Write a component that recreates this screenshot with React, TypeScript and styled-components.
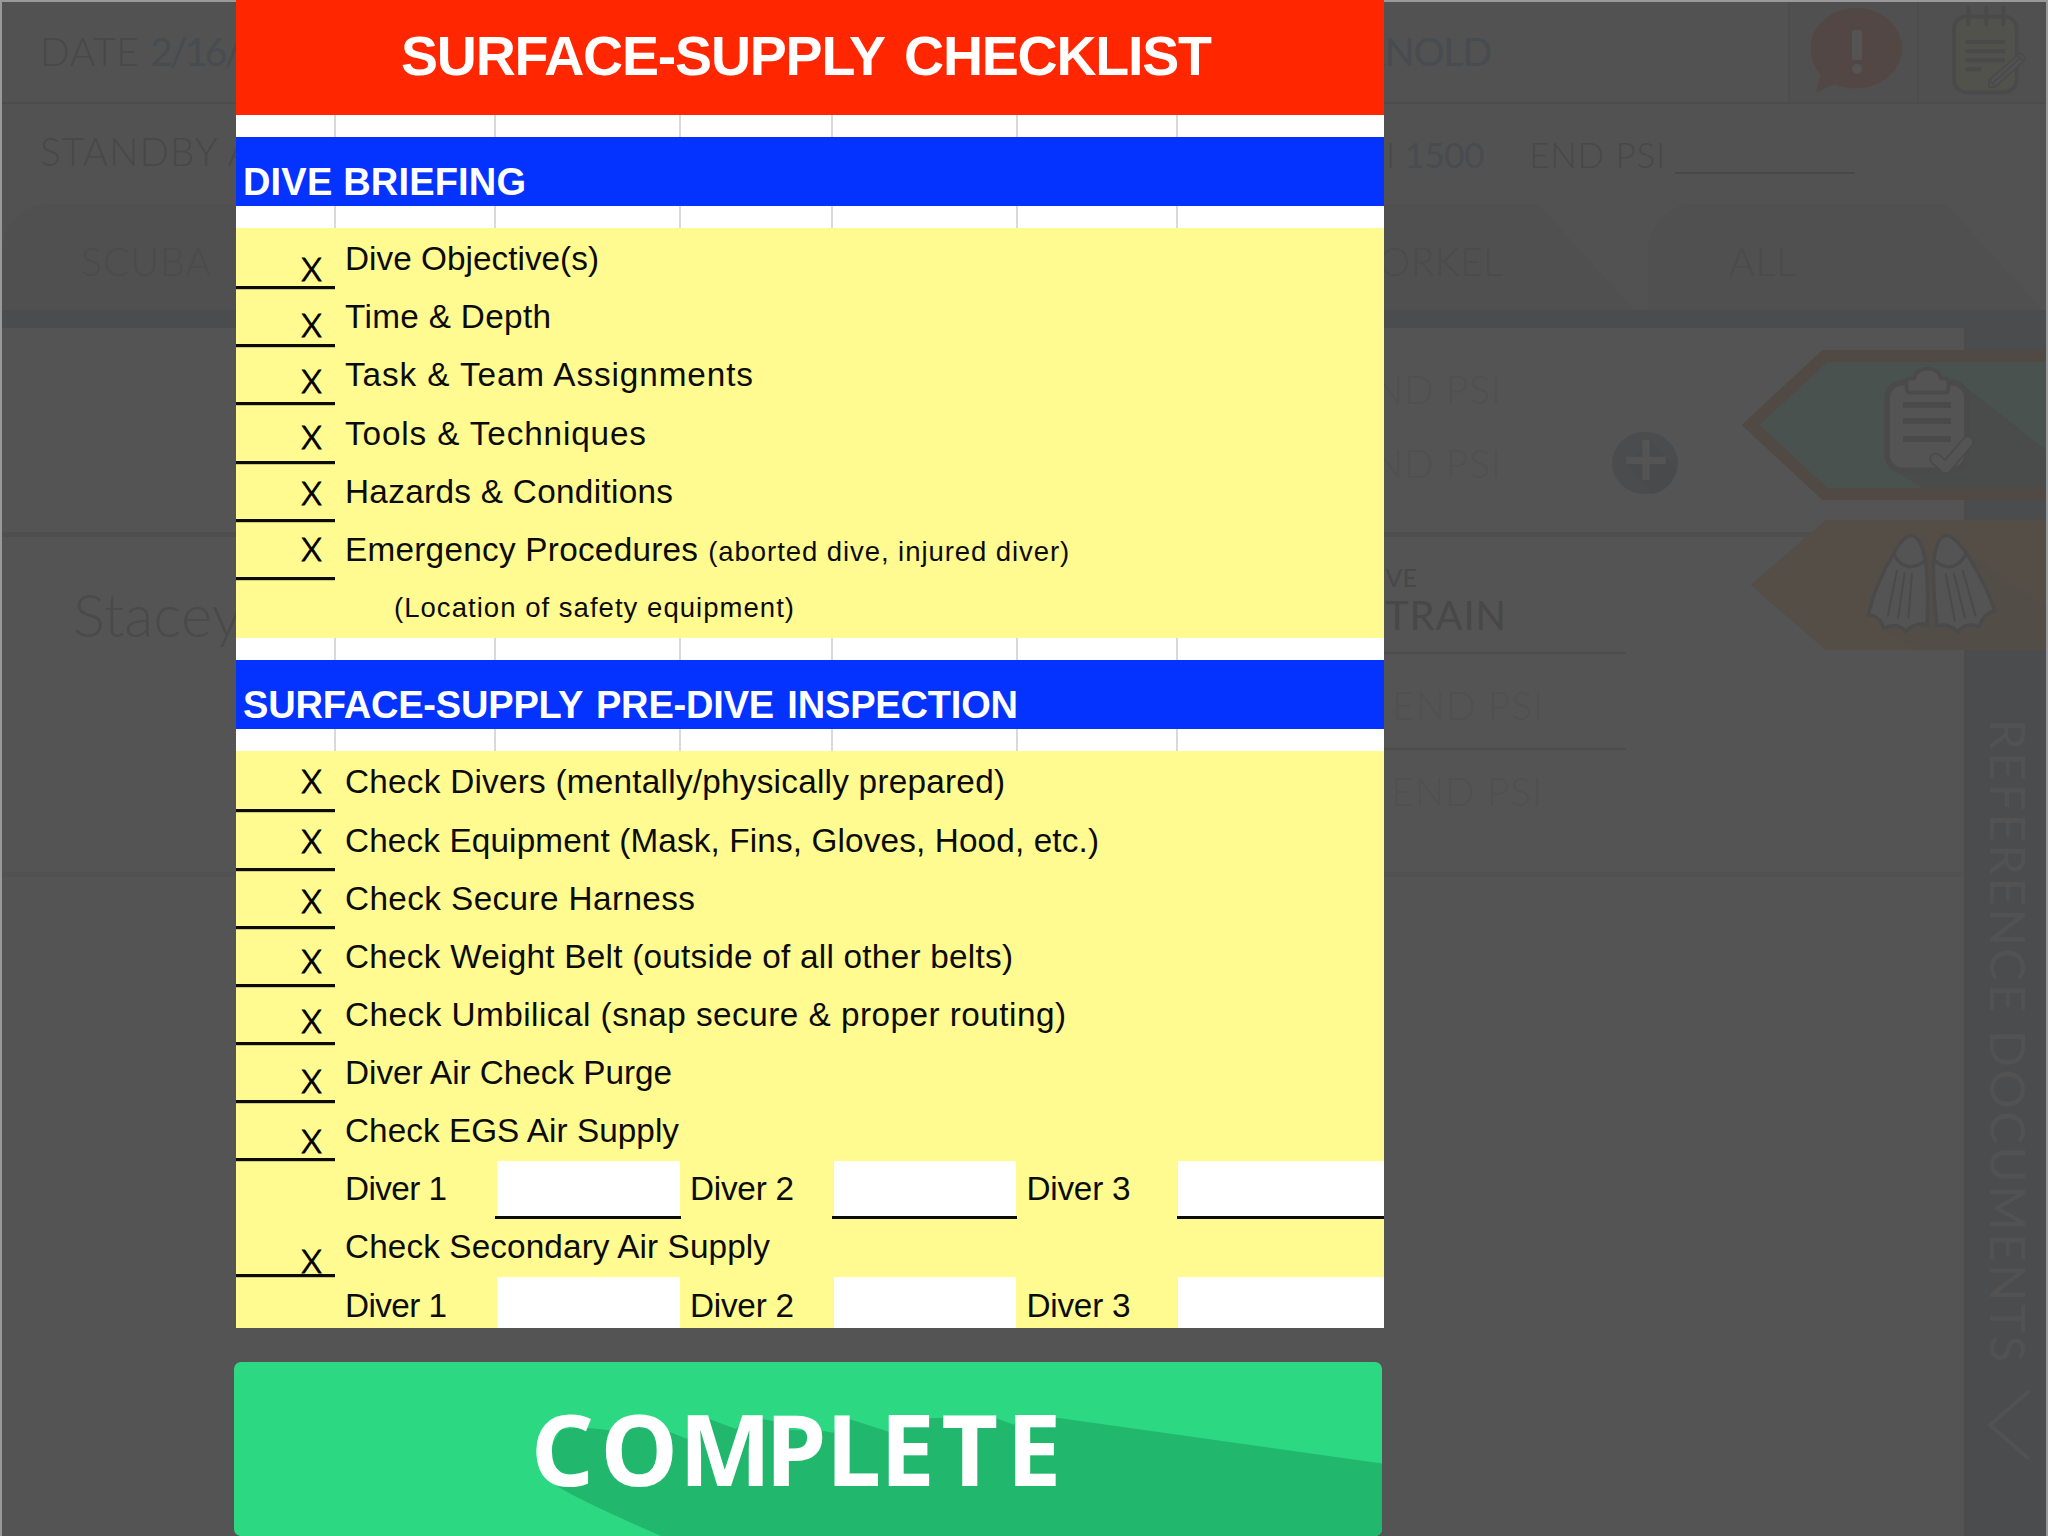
import React, { useLayoutEffect, useRef, useState } from 'react';
import styled, { createGlobalStyle, css } from 'styled-components';

const GlobalStyle = createGlobalStyle`
  * { box-sizing: border-box; }
  body { margin: 0; background: #545454; }
`;

const ui = `Lato, 'Open Sans', sans-serif`;
const sheetFont = `'Liberation Sans', Arial, sans-serif`;

/* ---------- Text tracked to fill a given measure ---------- */

const Tracked = styled.span<{ $vertical?: boolean }>`
  display: inline-block;
  white-space: pre;
  ${(p) => p.$vertical && css`writing-mode: vertical-rl;`}
`;

function Fit({ width, vertical, children }: { width: number; vertical?: boolean; children: string }) {
  const ref = useRef<HTMLSpanElement>(null);
  const [spacing, setSpacing] = useState(0);
  useLayoutEffect(() => {
    const el = ref.current;
    if (!el) return;
    el.style.letterSpacing = '0px';
    const box = el.getBoundingClientRect();
    const natural = vertical ? box.height : box.width;
    const next = (width - natural) / (children.length - 1);
    el.style.letterSpacing = `${next}px`;
    setSpacing(next);
  }, [width, vertical, children]);
  return (
    <Tracked ref={ref} $vertical={vertical} style={{ letterSpacing: `${spacing}px` }}>
      {children}
    </Tracked>
  );
}

/* ---------- Dimmed dive log behind the sheet ---------- */

const Root = styled.div`
  position: relative;
  width: 2048px;
  height: 1536px;
  overflow: hidden;
`;

const Screen = styled.div`
  position: relative;
  width: 2048px;
  height: 1536px;
  overflow: hidden;
  display: flex;
  flex-direction: column;
  background: #525252;
  border: 2px solid #999;
  border-bottom: 0;
  font-family: ${ui};
  color: #484848;
`;

const Header = styled.header`
  flex: none;
  display: flex;
  height: 102px;
  border-bottom: 2px solid #4c4c4c;
`;

const HeaderTitle = styled.div`
  flex: 1;
  display: flex;
  justify-content: space-between;
  align-items: center;
  padding: 0 297px 2px 38px;
  font-size: 39px;
  font-weight: 300;
  line-height: 60px;
  white-space: pre;
`;

const Value = styled.span`
  color: #484b4f;
  font-weight: 400;
`;

const HeaderCell = styled.div`
  width: 129px;
  border-left: 2px solid #4d4d4d;
  background: #505050;
  svg { display: block; }
`;

const GaugeBar = styled.div`
  flex: none;
  display: flex;
  justify-content: space-between;
  height: 100px;
  padding: 0 191px 0 38px;
  font-size: 38.5px;
  font-weight: 300;
  line-height: 94px;
  white-space: pre;
`;

const Gauges = styled.div`
  display: flex;
  font-size: 35px;
  line-height: 101px;
`;

const Blank = styled.span`
  width: 180px;
  height: 70px;
  margin-left: 9px;
  border-bottom: 2px solid #484848;
`;

const EndPsi = styled.span`
  margin-left: 45px;
`;

const Tabs = styled.nav`
  flex: none;
  display: flex;
  height: 106px;
`;

const Tab = styled.div<{ $inset: number; $push?: boolean }>`
  flex: none;
  width: 394px;
  padding: 8px 0 0 ${(p) => p.$inset}px;
  margin-left: ${(p) => (p.$push ? 'auto' : '0')};
  margin-right: 14px;
  border-top-left-radius: 46px 48px;
  background: #505050;
  clip-path: polygon(0 0, 298px 0, 100% 100%, 0 100%);
  font-size: 39px;
  font-weight: 300;
  line-height: 98px;
  color: #4b4b4b;
  &:last-child { margin-right: 4px; }
`;

const Band = styled.div`
  flex: none;
  height: 18px;
  background: #4b4c4e;
`;

const Body = styled.div`
  flex: 1;
  display: flex;
  min-height: 0;
`;

const Log = styled.main`
  flex: 1;
  background: #545454;
`;

const TeamRow = styled.section`
  display: flex;
  height: 209px;
  padding-top: 24px;
  border-bottom: 5px solid #4e4e4e;
`;

const FaintColumn = styled.div<{ $right: number }>`
  width: ${(p) => p.$right}px;
  display: flex;
  flex-direction: column;
  align-items: flex-end;
  font-size: 39px;
  font-weight: 300;
  line-height: 74px;
  color: #505050;
`;

const AddButton = styled.div`
  margin: 79px 0 0 109px;
  svg { display: block; }
`;

const DiverRow = styled.section`
  display: flex;
  height: 340px;
  border-bottom: 5px solid #515151;
`;

const DiverName = styled.div`
  width: 1000px;
  padding: 37px 0 0 71px;
  font-size: 60px;
  font-weight: 300;
  line-height: 80px;
  color: #4a4a4a;
`;

const DiverDetail = styled.div`
  width: 624px;
  display: flex;
  flex-direction: column;
`;

const Purpose = styled.div`
  height: 117px;
  padding: 21px 119px 0 0;
  border-bottom: 2px solid #4c4c4c;
  display: flex;
  flex-direction: column;
  align-items: flex-end;
  font-size: 40px;
  line-height: 38px;
  color: #484848;
`;

const PurposeCaption = styled.small`
  margin-right: 90px;
  font-size: 25px;
`;

const PsiLine = styled.div<{ $line?: boolean }>`
  height: ${(p) => (p.$line ? 96 : 90)}px;
  padding-right: ${(p) => (p.$line ? 82 : 83)}px;
  border-bottom: ${(p) => (p.$line ? '2px solid #4c4c4c' : '0')};
  text-align: right;
  font-size: 39px;
  font-weight: 300;
  line-height: ${(p) => (p.$line ? 102 : 82)}px;
  color: #505050;
`;

const Sidebar = styled.aside`
  width: 82px;
  background: #4b4c4e;
  display: flex;
  flex-direction: column;
  align-items: center;
  padding: 391px 0 0 8px;
  font-size: 49px;
  line-height: 60px;
  color: #525252;
  svg { display: block; margin: 24px 0 0 -1px; }
`;

const Flags = styled.div`
  position: absolute;
  top: 338px;
  right: 0;
  svg { display: block; }
`;

/* ---------- Checklist sheet ---------- */

const Modal = styled.div`
  position: absolute;
  top: 0;
  left: 236px;
  width: 1148px;
  display: flex;
  flex-direction: column;
`;

const Sheet = styled.article`
  position: relative;
  height: 1328px;
  overflow: hidden;
  background: #fffb91;
  font-family: ${sheetFont};
  color: #0c0c06;
`;

const Title = styled.h1`
  margin: 0;
  height: 115px;
  background: #ff2600;
  color: #fff;
  padding-left: 165px;
  font-size: 55.5px;
  line-height: 112px;
  word-spacing: 6px;
`;

const columns = '99px 160px 185px 152px 184.5px 160px 1fr';

const Gridlines = styled.div<{ $h: number }>`
  display: grid;
  grid-template-columns: ${columns};
  height: ${(p) => p.$h}px;
  background: #fff;
  span + span {
    margin-left: -1px;
    border-left: 2px solid #d9d9d9;
  }
`;

const SectionHead = styled.h2<{ $wordGap: number }>`
  margin: 0;
  height: 69px;
  padding: 26px 0 0 7px;
  background: #0433ff;
  color: #fff;
  font-size: 38px;
  line-height: 38px;
  word-spacing: ${(p) => p.$wordGap}px;
`;

const Rows = styled.div<{ $pitch: number }>`
  display: grid;
  grid-template-rows: 61.2px;
  grid-auto-rows: ${(p) => p.$pitch}px;
`;

const Row = styled.div`
  display: grid;
  grid-template-columns: ${columns};
  font-size: 33.3px;
  line-height: 38px;
`;

const Rule = styled.div`
  border-bottom: 3px solid #0c0c06;
  box-shadow: 0 1px 0 rgba(12, 12, 6, 0.2);
`;

const Label = styled.div<{ $wide?: boolean; $indent?: number }>`
  grid-column: ${(p) => (p.$wide ? '2 / -1' : 'auto')};
  align-self: end;
  padding: 0 0 ${(p) => (p.$indent ? 13 : 11)}px ${(p) => p.$indent ?? 10}px;
  white-space: nowrap;
`;

const Note = styled.small<{ $gap?: number }>`
  margin-left: ${(p) => p.$gap ?? 0}px;
  font-size: 27.5px;
  line-height: 30px;
`;

const Field = styled.div`
  margin-right: -0.5px;
  border-bottom: 3px solid #0c0c06;
  background: linear-gradient(#fff, #fff) 1.5px 0 / calc(100% - 3px) 100% no-repeat;
  &:last-child {
    background-size: 100% 100%;
  }
`;

const Marks = styled.div<{ $top: number; $pitch: number }>`
  position: absolute;
  top: ${(p) => p.$top}px;
  left: 0;
  width: 151px;
  text-align: center;
  font-family: ${ui};
  font-weight: 300;
  font-size: 45px;
  line-height: ${(p) => p.$pitch}px;
  color: #000;
  -webkit-text-stroke: 0.9px #000;
  div { height: ${(p) => p.$pitch}px; }
`;

const CompleteButton = styled.button`
  position: relative;
  display: flex;
  margin: 34px 0 0 -2px;
  padding: 0 0 0 297px;
  width: 1148px;
  height: 174px;
  overflow: hidden;
  border: 0;
  border-radius: 7px;
  background: #2cd982;
  color: #fff;
  text-align: left;
  font-family: 'Noto Sans', 'Open Sans', sans-serif;
  font-weight: 700;
  font-size: 98px;
  line-height: 173px;
`;

const Caption = styled.span`
  position: relative;
  white-space: nowrap;
`;

const Kern = styled.span<{ $by: number }>`
  letter-spacing: ${(p) => p.$by}px;
`;

const LongShadow = styled.svg`
  position: absolute;
  inset: 0;
`;

/* ---------- Icons ---------- */

const AlertIcon = () => (
  <svg width="124" height="98" viewBox="0 6 372 294">
    <path fill="#524744" d="M199 24C275 24 336 78 336 144S275 265 199 265C174 265 153 260 134 254C122 256 96 270 79 276C80 262 91 234 92 222C73 203 62 174 62 144C62 78 123 24 199 24Z" />
    <rect x="186" y="90" width="30" height="90" rx="5" fill="#545454" />
    <circle cx="201" cy="207" r="15" fill="#545454" />
  </svg>
);

const NotesIcon = () => (
  <svg width="127" height="98" viewBox="386 6 381 294">
    <rect x="491" y="49" width="188" height="228" rx="38" fill="#51524b" stroke="#4a4a4a" strokeWidth="11" />
    <path fill="none" stroke="#4a4a4a" strokeWidth="12" strokeLinecap="round" d="M534 23V73M588 23V73M639 23V73" />
    <path fill="none" stroke="#4a4a4a" strokeWidth="12" d="M525 126H644M525 153H644M525 181H644M525 208H573" />
    <path fill="#525252" stroke="#4a4a4a" strokeWidth="5" strokeLinejoin="round" d="M596 240L681 166L691 160L706 174L700 183L616 260L596 262ZM596 240L616 260M681 166L700 183M606 250L690 174" />
  </svg>
);

const PlusIcon = () => (
  <svg width="68" height="64" viewBox="0 0 204 192">
    <ellipse cx="102" cy="96" rx="99" ry="93" fill="#4b4c4e" />
    <path fill="#494a4c" d="M116 28L196 112C194 150 160 184 124 188L46 98Z" />
    <path fill="#545454" d="M94 27h22v50h48v22h-48v48h-22v-48h-48v-22h48z" />
  </svg>
);

const ChevronIcon = () => (
  <svg width="44" height="72" viewBox="0 0 44 72">
    <path fill="none" stroke="#525252" strokeWidth="4" d="M42 2L3 36L42 70" />
  </svg>
);

const FlagIcons = () => (
  <svg width="306" height="320" viewBox="0 0 918 960">
    <path fill="#514a44" d="M5 255L247 30H918V480H247Z" />
    <path fill="#49524e" d="M58 255L262 66H918V444H262Z" />
    <path fill="#494c4a" d="M670 136L918 330V444H548L455 385Z" />
    <rect x="441" y="128" width="240" height="263" rx="48" fill="#545454" stroke="#4a4a4a" strokeWidth="17" />
    <path fill="#545454" stroke="#4a4a4a" strokeWidth="11" strokeLinejoin="round" d="M524 115C526 76 600 76 602 115H614Q625 115 625 127V146Q625 158 614 158H511Q500 158 500 146V127Q500 115 511 115Z" />
    <path stroke="#4a4a4a" strokeWidth="18" d="M489 195H633M489 243H633M489 297H633" />
    <path fill="none" stroke="#4a4a4a" strokeWidth="38" strokeLinecap="round" strokeLinejoin="round" d="M587 357L617 383L683 306" />
    <path fill="none" stroke="#545454" strokeWidth="28" strokeLinecap="round" strokeLinejoin="round" d="M587 357L617 383L683 306" />

    <path fill="#544e47" d="M32 735L257 540H918V930H257Z" />
    <path fill="#524d47" d="M680 634L918 805V930H530L430 866L545 590L580 628Z" />
    <g fill="#545454" stroke="#4a4a4a" strokeWidth="10" strokeLinejoin="miter">
      <path d="M461 640C480 606 500 586 516 586C534 588 549 622 556 662C566 720 561 790 562 855C542 848 514 854 497 874C484 856 455 850 431 866C428 846 410 826 385 824C400 760 425 700 461 640Z" />
      <path d="M680 640C655 606 634 586 618 586C598 590 586 622 582 662C576 720 584 790 591 857C612 850 638 858 653 876C666 858 690 848 717 860C722 840 742 816 764 812C745 750 710 690 680 640Z" />
      <path fill="none" d="M461 640C480 686 520 690 556 662M680 640C652 690 616 690 582 660" />
      <path fill="none" strokeWidth="6" d="M471 690L443 830M494 698L474 836M516 698L505 836M617 701L645 844M641 698L676 836M668 690L707 829" />
    </g>
  </svg>
);

/* ---------- Content ---------- */

type Item = { text: string; width: number };

const briefing: Item[] = [
  { text: 'Dive Objective(s)', width: 254 },
  { text: 'Time & Depth', width: 206 },
  { text: 'Task & Team Assignments', width: 408 },
  { text: 'Tools & Techniques', width: 301 },
  { text: 'Hazards & Conditions', width: 328 },
];

const inspection: Item[] = [
  { text: 'Check Divers (mentally/physically prepared)', width: 660 },
  { text: 'Check Equipment (Mask, Fins, Gloves, Hood, etc.)', width: 754 },
  { text: 'Check Secure Harness', width: 350 },
  { text: 'Check Weight Belt (outside of all other belts)', width: 668 },
  { text: 'Check Umbilical (snap secure & proper routing)', width: 721 },
  { text: 'Diver Air Check Purge', width: 327 },
  { text: 'Check EGS Air Supply', width: 334 },
];

const completeGlyphs: [string, number][] = [
  ['C', 6.5], ['O', 1], ['M', -6], ['P', 0], ['L', -1], ['E', 6.5], ['T', 8.5], ['E', 0],
];

const Spacer = ({ h }: { h: number }) => (
  <Gridlines $h={h}>
    {Array.from({ length: 7 }, (_, i) => <span key={i} />)}
  </Gridlines>
);

const CheckRow = ({ text, width }: Item) => (
  <Row>
    <Rule />
    <Label $wide><Fit width={width}>{text}</Fit></Label>
  </Row>
);

const DiverFields = () => (
  <Row>
    <span />
    <Label><Fit width={102}>Diver 1</Fit></Label>
    <Field />
    <Label><Fit width={104}>Diver 2</Fit></Label>
    <Field />
    <Label><Fit width={104}>Diver 3</Fit></Label>
    <Field />
  </Row>
);

export default function App() {
  return (
    <Root>
      <GlobalStyle />
      <Screen>
        <Header>
          <HeaderTitle>
            <span><Fit width={99}>DATE</Fit> <Value><Fit width={92}>2/16/</Fit></Value></span>
            <Value><Fit width={156}>ARNOLD</Fit></Value>
          </HeaderTitle>
          <HeaderCell><AlertIcon /></HeaderCell>
          <HeaderCell><NotesIcon /></HeaderCell>
        </Header>
        <GaugeBar>
          <Fit width={213}>STANDBY A</Fit>
          <Gauges>
            <span>PSI <Value><Fit width={80}>1500</Fit></Value></span>
            <EndPsi><Fit width={136}>END PSI</Fit></EndPsi>
            <Blank />
          </Gauges>
        </GaugeBar>
        <Tabs>
          <Tab $inset={79}><Fit width={130}>SCUBA</Fit></Tab>
          <Tab $inset={88} $push><Fit width={175}>SNORKEL</Fit></Tab>
          <Tab $inset={81}><Fit width={67}>ALL</Fit></Tab>
        </Tabs>
        <Band />
        <Body>
          <Log>
            <TeamRow>
              <FaintColumn $right={1500}>
                <Fit width={151}>END PSI</Fit>
                <Fit width={151}>END PSI</Fit>
              </FaintColumn>
              <AddButton><PlusIcon /></AddButton>
            </TeamRow>
            <DiverRow>
              <DiverName>Stacey</DiverName>
              <DiverDetail>
                <Purpose>
                  <PurposeCaption>DIVE</PurposeCaption>
                  <Fit width={121}>TRAIN</Fit>
                </Purpose>
                <PsiLine $line><Fit width={151}>END PSI</Fit></PsiLine>
                <PsiLine><Fit width={151}>END PSI</Fit></PsiLine>
              </DiverDetail>
            </DiverRow>
          </Log>
          <Sidebar>
            <Fit vertical width={643}>REFERENCE DOCUMENTS</Fit>
            <ChevronIcon />
          </Sidebar>
        </Body>
        <Flags><FlagIcons /></Flags>
      </Screen>

      <Modal>
        <Sheet>
          <Title><Fit width={811}>SURFACE-SUPPLY CHECKLIST</Fit></Title>
          <Spacer h={22} />
          <SectionHead $wordGap={0}><Fit width={283}>DIVE BRIEFING</Fit></SectionHead>
          <Spacer h={22} />
          <Rows $pitch={58.13}>
            {briefing.map((item) => <CheckRow key={item.text} {...item} />)}
            <Row>
              <Rule />
              <Label $wide>
                <Fit width={353}>Emergency Procedures</Fit>
                <Note $gap={10}><Fit width={361}>(aborted dive, injured diver)</Fit></Note>
              </Label>
            </Row>
            <Row>
              <span />
              <Label $wide $indent={59}><Note><Fit width={400}>(Location of safety equipment)</Fit></Note></Label>
            </Row>
          </Rows>
          <Spacer h={22} />
          <SectionHead $wordGap={3}><Fit width={775}>SURFACE-SUPPLY PRE-DIVE INSPECTION</Fit></SectionHead>
          <Spacer h={22.3} />
          <Rows $pitch={58.13}>
            {inspection.map((item) => <CheckRow key={item.text} {...item} />)}
            <DiverFields />
            <CheckRow text="Check Secondary Air Supply" width={425} />
            <DiverFields />
          </Rows>
          <Marks $top={236.3} $pitch={56}>
            {Array.from({ length: 6 }, (_, i) => <div key={i}>x</div>)}
          </Marks>
          <Marks $top={747.2} $pitch={59.95}>
            {Array.from({ length: 9 }, (_, i) => <div key={i}>{i === 7 ? '' : 'x'}</div>)}
          </Marks>
        </Sheet>
        <CompleteButton>
          <LongShadow width="1148" height="174" viewBox="0 0 1148 174">
            <path
              transform="translate(291 28) scale(.33333)"
              fill="#21b86d"
              d="M97 289L60 200L108 118Q150 110 215 116L252 121L350 105L440 128L487 147L500 90L547 85L633 117L660 90L699 85L748 94L790 120L892 122L925 128L940 90L970 86L1094 126L1110 90L1230 84L1300 82L1412 84L1466 104L1480 84L1602 84L2573 221V450H430L408 438Q160 330 97 289Z"
            />
          </LongShadow>
          <Caption>
            {completeGlyphs.map(([glyph, by], i) => <Kern key={i} $by={by}>{glyph}</Kern>)}
          </Caption>
        </CompleteButton>
      </Modal>
    </Root>
  );
}
